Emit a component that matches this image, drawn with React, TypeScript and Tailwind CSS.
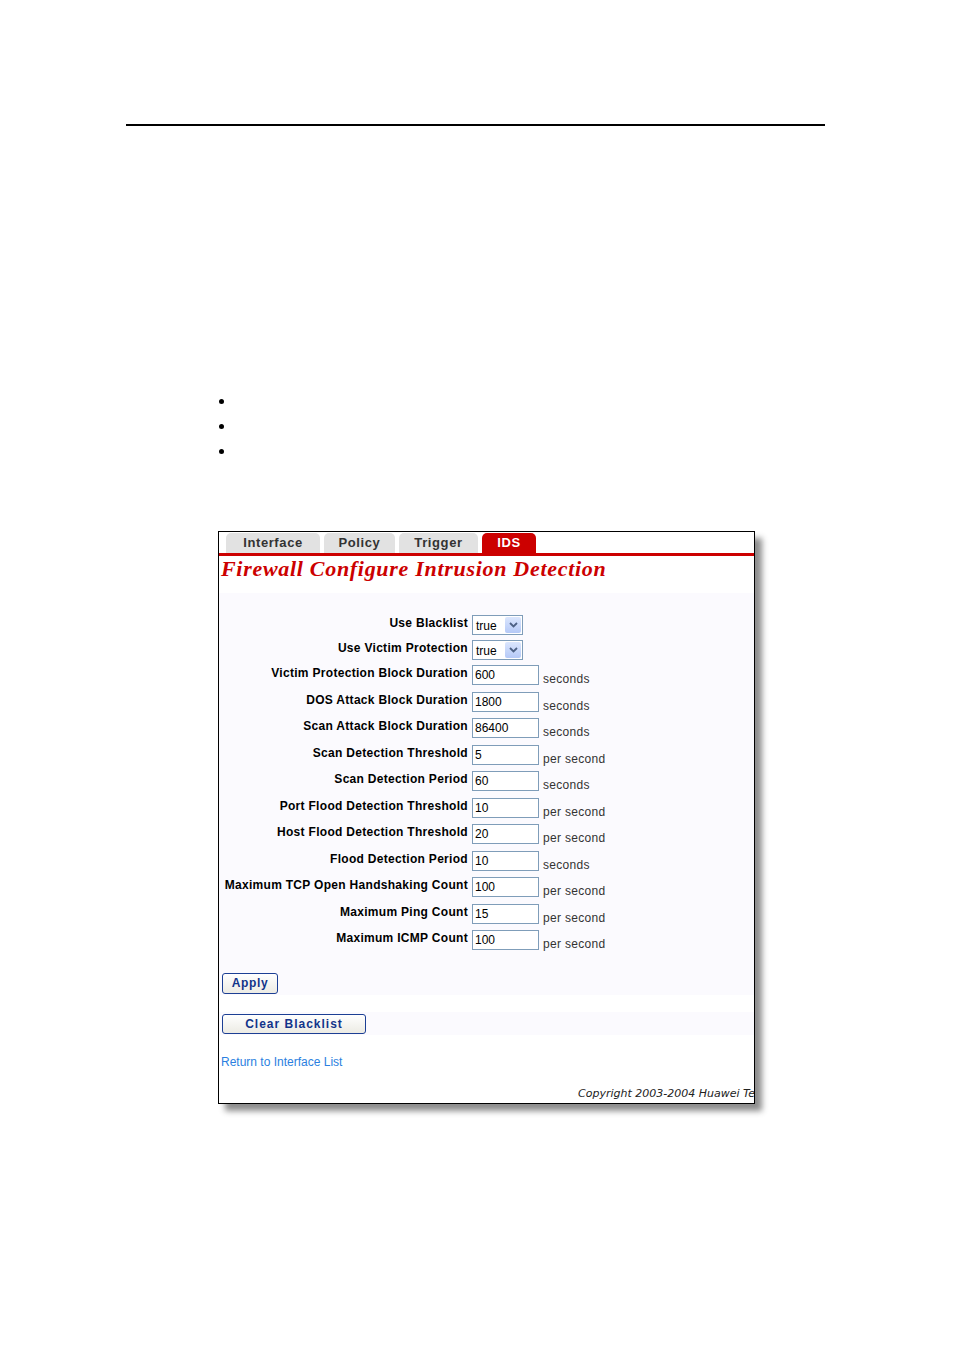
import React from "react";

const rows: { label: string; value: string; unit: string }[] = [
  { label: "Victim Protection Block Duration", value: "600", unit: "seconds" },
  { label: "DOS Attack Block Duration", value: "1800", unit: "seconds" },
  { label: "Scan Attack Block Duration", value: "86400", unit: "seconds" },
  { label: "Scan Detection Threshold", value: "5", unit: "per second" },
  { label: "Scan Detection Period", value: "60", unit: "seconds" },
  { label: "Port Flood Detection Threshold", value: "10", unit: "per second" },
  { label: "Host Flood Detection Threshold", value: "20", unit: "per second" },
  { label: "Flood Detection Period", value: "10", unit: "seconds" },
  { label: "Maximum TCP Open Handshaking Count", value: "100", unit: "per second" },
  { label: "Maximum Ping Count", value: "15", unit: "per second" },
  { label: "Maximum ICMP Count", value: "100", unit: "per second" },
];

function Select({ value }: { value: string }) {
  return (
    <div className="w-[51px] h-[20px] border border-[#7f9db9] bg-white flex items-stretch">
      <div className="flex-1 pl-[3px] pt-[3px] text-[12px] leading-[14px] text-black font-['Liberation_Sans',sans-serif]">
        {value}
      </div>
      <div className="w-[16px] m-[1px] bg-gradient-to-b from-[#dbe6fd] to-[#b5c9f7] rounded-[2px] flex items-center justify-center">
        <svg width="9" height="6" viewBox="0 0 9 6">
          <path d="M1 1 L4.5 4.5 L8 1" fill="none" stroke="#4d6185" strokeWidth="1.8" />
        </svg>
      </div>
    </div>
  );
}

function Tab({ label, w, active }: { label: string; w: string; active?: boolean }) {
  return (
    <div
      className={`${w} h-[20px] rounded-t-[5px] flex items-center justify-center text-[13px] font-bold tracking-[0.6px] font-['Liberation_Sans',sans-serif] ${
        active ? "bg-[#cc0000] text-white" : "bg-[#e2e2e2] text-[#333]"
      }`}
    >
      {label}
    </div>
  );
}

export default function App() {
  return (
    <div className="w-[954px] h-[1351px] bg-white overflow-hidden">
      <div className="pt-[124px] pl-[126px]">
        <div className="w-[699px] h-[2px] bg-black" />
      </div>
      <div className="mt-[273px] pl-[219px] flex flex-col gap-[20px]">
        <div className="w-[5px] h-[5px] rounded-full bg-black" />
        <div className="w-[5px] h-[5px] rounded-full bg-black" />
        <div className="w-[5px] h-[5px] rounded-full bg-black" />
      </div>
      <div className="mt-[77px] ml-[218px] w-[537px] h-[573px] border border-black bg-white shadow-[7px_7px_6px_rgba(0,0,0,0.45)] overflow-hidden font-['Liberation_Sans',sans-serif]">
        <div className="pt-[1px] pl-[7px] flex gap-[4px]">
          <Tab label="Interface" w="w-[94px]" />
          <Tab label="Policy" w="w-[71px]" />
          <Tab label="Trigger" w="w-[79px]" />
          <Tab label="IDS" w="w-[54px]" active />
        </div>
        <div className="h-[3px] bg-[#cc0000]" />
        <div className="h-[37px] pl-[2px] pt-[1px] text-[22px] leading-[24px] tracking-[0.7px] font-bold italic text-[#cc0000] font-['Liberation_Serif',serif] whitespace-nowrap">
          Firewall Configure Intrusion Detection
        </div>
        <div className="h-[402px] bg-[#fbfafe] pt-[22px]">
          <div className="h-[25px] flex items-start">
            <div className="w-[249px] text-right text-[12px] leading-[14px] tracking-[0.3px] font-bold text-black pt-[1px]">Use Blacklist</div>
            <div className="ml-[4px]"><Select value="true" /></div>
          </div>
          <div className="h-[25px] flex items-start">
            <div className="w-[249px] text-right text-[12px] leading-[14px] tracking-[0.3px] font-bold text-black pt-[1px]">Use Victim Protection</div>
            <div className="ml-[4px]"><Select value="true" /></div>
          </div>
          {rows.map((r) => (
            <div key={r.label} className="h-[26.5px] flex items-start">
              <div className="w-[249px] text-right text-[12px] leading-[14px] tracking-[0.3px] font-bold text-black pt-[1px] whitespace-nowrap">
                {r.label}
              </div>
              <div className="ml-[4px] w-[67px] h-[20px] border border-[#7f9db9] bg-white pl-[2px] pt-[2px] text-[12px] leading-[14px] text-black">
                {r.value}
              </div>
              <div className="ml-[4px] pt-[7px] text-[12px] leading-[14px] tracking-[0.3px] text-[#333]">{r.unit}</div>
            </div>
          ))}
          <div className="mt-[16px] ml-[3px] w-[56px] h-[21px] border border-[#1c3f94] rounded-[3px] bg-gradient-to-b from-white to-[#ecebe4] flex items-center justify-center text-[12px] font-bold tracking-[0.6px] text-[#12348a]">
            Apply
          </div>
        </div>
        <div className="h-[17px]" />
        <div className="h-[23px] bg-[#fbfafe] pt-[2px]">
          <div className="ml-[3px] w-[144px] h-[20px] border border-[#1c3f94] rounded-[3px] bg-gradient-to-b from-white to-[#ecebe4] flex items-center justify-center text-[12px] font-bold tracking-[1px] text-[#12348a]">
            Clear Blacklist
          </div>
        </div>
        <div className="pl-[2px] pt-[20px] text-[12px] leading-[14px] text-[#2b7fe0]">Return to Interface List</div>
        <div className="pl-[359px] pt-[18px] text-[11px] leading-[13px] italic text-[#222] whitespace-nowrap font-['DejaVu_Sans',sans-serif]">
          Copyright 2003-2004 Huawei Te
        </div>
      </div>
    </div>
  );
}
